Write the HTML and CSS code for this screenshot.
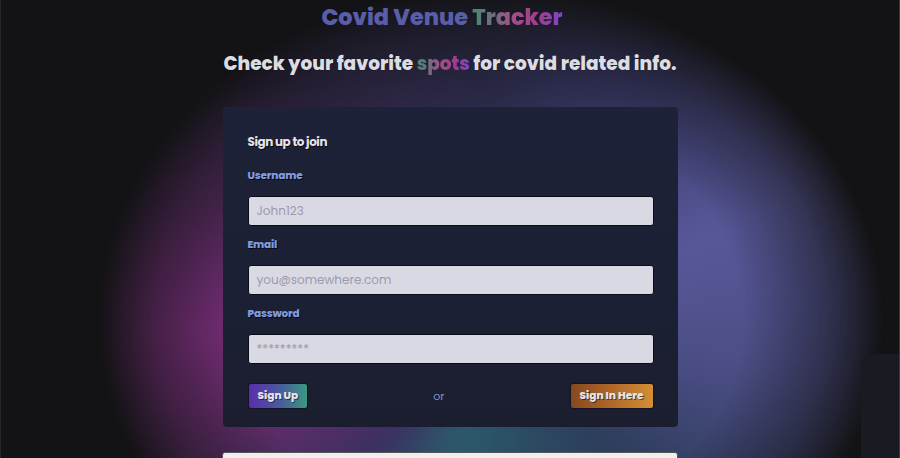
FILE: index.html
```html
<!DOCTYPE html>
<html>
<head>
<meta charset="utf-8">
<link rel="stylesheet" href="styles.css">
</head>
<body>
<div class="page">
  <div class="glow"></div>
  <div class="blob"></div>
  <h1 class="title">Covid Venue <span class="grad">Tracker</span></h1>
  <h2 class="subtitle">Check your favorite <span class="grad">spots</span> for covid related info.</h2>
  <form class="card">
    <h3 class="card-title">Sign up to join</h3>
    <label class="label">Username</label>
    <input class="input" type="text" placeholder="John123">
    <label class="label">Email</label>
    <input class="input" type="text" placeholder="you@somewhere.com">
    <label class="label">Password</label>
    <input class="input" type="text" placeholder="*********">
    <div class="actions">
      <button type="button" class="btn btn-up">Sign Up</button>
      <span class="or">or</span>
      <button type="button" class="btn btn-in">Sign In Here</button>
    </div>
  </form>
  <div class="panel"></div>
</div>
</body>
</html>
```
FILE: styles.css
```css
html, body {
  margin: 0;
  padding: 0;
  height: 100%;
  overflow: hidden;
}
body {
  background: #131315;
  font-family: "Poppins", "Noto Sans", "Open Sans", sans-serif;
}
.page {
  position: relative;
  height: 458px;
  display: flex;
  flex-direction: column;
  align-items: center;
  border-left: 1px solid #26262a;
  border-right: 1px solid #3a3a3e;
  box-sizing: border-box;
  background: #131315;
  overflow: hidden;
}
.page > * {
  flex-shrink: 0;
}
.glow {
  position: absolute;
  left: 95px;
  top: -15px;
  width: 790px;
  height: 670px;
  border-radius: 50%;
  background: conic-gradient(from 0deg at 50% 50%,
    #2a2a48 0deg,
    #3a3a6c 35deg,
    #58589a 68deg,
    #4c4e86 100deg,
    #2e3c5c 135deg,
    #2a5266 175deg,
    #2c5a6c 198deg,
    #3a3060 222deg,
    #662c6a 250deg,
    #7a2e7a 268deg,
    #5a2a62 290deg,
    #34284e 320deg,
    #2a2a48 360deg);
  -webkit-mask-image: radial-gradient(closest-side, #000 64%, rgba(0,0,0,0.5) 85%, transparent 100%);
  mask-image: radial-gradient(closest-side, #000 64%, rgba(0,0,0,0.5) 85%, transparent 100%);
  filter: blur(12px);
}
.blob {
  position: absolute;
  right: 0;
  top: 354px;
  width: 38px;
  height: 110px;
  background: #181b22;
  border-top-left-radius: 12px;
}
.title {
  position: relative;
  margin: 5px 0 0;
  padding-right: 16px;
  font-size: 22.3px;
  font-weight: 800;
  color: #5a5ea8;
  line-height: 26px;
}
.grad {
  background: linear-gradient(90deg, #3f8c74 0%, #a0508a 45%, #a03d8c 70%, #8045c8 100%);
  -webkit-background-clip: text;
  background-clip: text;
  color: transparent;
  text-shadow: none;
}
.subtitle {
  position: relative;
  margin: 21px 0 0;
  font-size: 18.5px;
  font-weight: 800;
  color: #dcdce2;
  line-height: 24px;
  text-shadow: 0 0 1px rgba(0, 0, 0, 0.8);
}
.card {
  position: relative;
  margin-top: 31px;
  width: 455px;
  height: 320px;
  box-sizing: border-box;
  padding: 27px 24px 0 25px;
  border-radius: 4px;
  background: linear-gradient(180deg, #1e2238 0%, #1c2034 60%, #1a1e2e 100%);
  display: flex;
  flex-direction: column;
}
.card-title {
  margin: 0;
  font-size: 12px;
  font-weight: 700;
  letter-spacing: -0.45px;
  color: #e4e4ea;
  line-height: 16px;
  text-shadow: 1px 1px 0 rgba(0, 0, 0, 0.7);
}
.label {
  margin-top: 12px;
  font-size: 10.5px;
  font-weight: 800;
  letter-spacing: -0.2px;
  color: #7f9ae0;
  line-height: 14px;
  text-shadow: 1px 1px 0 rgba(0, 0, 0, 0.7);
}
.card-title + .label {
  margin-top: 19px;
}
.input {
  margin-top: 13px;
  height: 30px;
  box-sizing: border-box;
  border: 1px solid #0c0c18;
  border-radius: 3px;
  background: #d9d9e4;
  padding: 0 8px;
  font-family: inherit;
  font-size: 12px;
  color: #333;
  outline: none;
}
.input::placeholder {
  color: #9c9aac;
}
.actions {
  margin-top: 19px;
  display: flex;
  align-items: center;
  justify-content: space-between;
}
.btn {
  height: 26px;
  border: 1px solid #141428;
  border-radius: 3px;
  font-family: inherit;
  font-size: 10.5px;
  font-weight: 800;
  color: #e2e2ea;
  padding: 0 9px;
  white-space: nowrap;
  text-shadow: 1px 1px 0 rgba(0, 0, 0, 0.5);
}
.btn-up {
  background: linear-gradient(90deg, #5a2eaa 0%, #4a5c9c 55%, #3a9880 100%);
}
.btn-in {
  background: linear-gradient(90deg, #86481e 0%, #b0682a 50%, #d48e34 100%);
}
.or {
  font-size: 11px;
  color: #8890d4;
}
.panel {
  position: relative;
  margin-top: 25px;
  width: 456px;
  height: 20px;
  background: #efefef;
  border: 1px solid #555;
  border-radius: 3px;
  box-sizing: border-box;
}
```
